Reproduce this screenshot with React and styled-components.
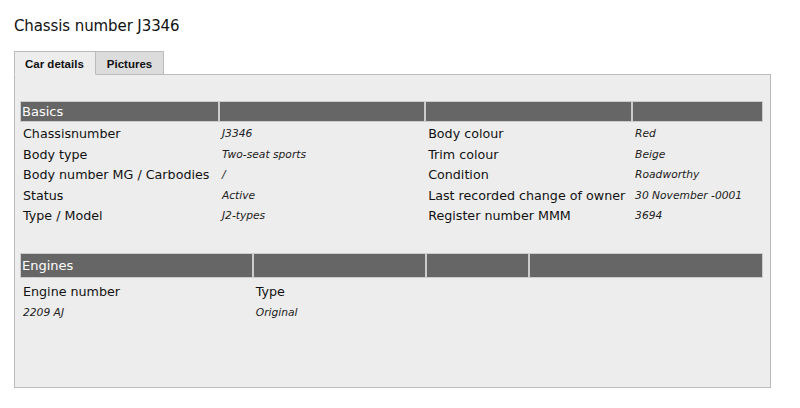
import styled, { createGlobalStyle } from "styled-components"

const GlobalStyle = createGlobalStyle`
body {
    margin: 0;
    background-color: #fff;
    font-family: "DejaVu Sans", Verdana, sans-serif;
    color: #222;
}
`

const basics = [
    ["Chassisnumber", "J3346", "Body colour", "Red"],
    ["Body type", "Two-seat sports", "Trim colour", "Beige"],
    ["Body number MG / Carbodies", "/", "Condition", "Roadworthy"],
    ["Status", "Active", "Last recorded change of owner", "30 November -0001"],
    ["Type / Model", "J2-types", "Register number MMM", "3694"],
]

export default function App() {
    return (
        <>
            <GlobalStyle />
            <Page>
                <Title>Chassis number J3346</Title>

                <Tabs>
                    <Tab active>Car details</Tab>
                    <Tab>Pictures</Tab>
                </Tabs>

                <Panel>
                    <Table>
                        <thead>
                            <tr>
                                <HeadCell w={197}>Basics</HeadCell>
                                <HeadCell w={205}></HeadCell>
                                <HeadCell w={205}></HeadCell>
                                <HeadCell w={129}></HeadCell>
                            </tr>
                        </thead>
                        <tbody>
                            {basics.map((r) => (
                                <tr key={r[0]}>
                                    <Label>{r[0]}</Label>
                                    <Value>{r[1]}</Value>
                                    <Label>{r[2]}</Label>
                                    <Value>{r[3]}</Value>
                                </tr>
                            ))}
                        </tbody>
                    </Table>

                    <EngineTable>
                        <thead>
                            <tr>
                                <HeadCell w={231} tall>Engines</HeadCell>
                                <HeadCell w={171} tall></HeadCell>
                                <HeadCell w={102} tall></HeadCell>
                                <HeadCell w={232} tall></HeadCell>
                            </tr>
                        </thead>
                        <tbody>
                            <tr>
                                <Label pt={7}>Engine number</Label>
                                <Label pt={7}>Type</Label>
                                <Label pt={7}></Label>
                                <Label pt={7}></Label>
                            </tr>
                            <tr>
                                <Value pt={6}>2209 AJ</Value>
                                <Value pt={6}>Original</Value>
                                <Value pt={6}></Value>
                                <Value pt={6}></Value>
                            </tr>
                        </tbody>
                    </EngineTable>
                </Panel>
            </Page>
        </>
    )
}

const Page = styled.div`
padding: 16px 0 0 14px;
width: 757px;
`
const Title = styled.h1`
margin: 0;
font-size: 15px;
font-weight: 400;
line-height: 20px;
letter-spacing: -0.1px;
color: #111;
`
const Tabs = styled.div`
display: flex;
margin-top: 15px;
position: relative;
z-index: 1;
`
const Tab = styled.div`
padding: ${p => p.active ? "2px 11px 0 10px" : "2px 11px 0"};
box-sizing: border-box;
height: 24px;
display: flex;
align-items: center;
font-family: "Liberation Sans", Arial, sans-serif;
font-weight: 700;
font-size: 11.5px;
color: #111;
border: 1px solid #bbb;
border-bottom: ${p => p.active ? "1px solid #ededed" : "1px solid #bbb"};
border-left: ${p => p.active ? "1px solid #bbb" : "none"};
background-color: ${p => p.active ? "#ededed" : "#dcdcdc"};
`
const Panel = styled.div`
margin-top: -1px;
height: 314px;
border: 1px solid #bbb;
background-color: #ededed;
padding: 27px 6px 0 6px;
box-sizing: border-box;
`
const Table = styled.table`
border-collapse: separate;
border-spacing: 2px 0;
margin-left: -2px;
table-layout: fixed;
`
const EngineTable = styled(Table)`
margin-top: 30px;
`
const HeadCell = styled.th`
width: ${p => p.w}px;
height: ${p => p.tall ? "23px" : "19px"};
padding: 0 1px;
box-sizing: border-box;
background-color: #666;
color: #fff;
font-size: 13px;
font-weight: 400;
text-align: left;
box-shadow: 0 0 0 1px #ccc;
`
const Label = styled.td`
padding: ${p => p.pt ?? 5}px 1px 0 2px;
line-height: 15.5px;
font-size: 12.7px;
color: #111;
white-space: nowrap;
vertical-align: middle;
`
const Value = styled.td`
padding: ${p => p.pt ?? 5}px 1px 0 2px;
line-height: 15.5px;
font-size: 10.7px;
font-style: italic;
color: #222;
white-space: nowrap;
vertical-align: middle;
`
